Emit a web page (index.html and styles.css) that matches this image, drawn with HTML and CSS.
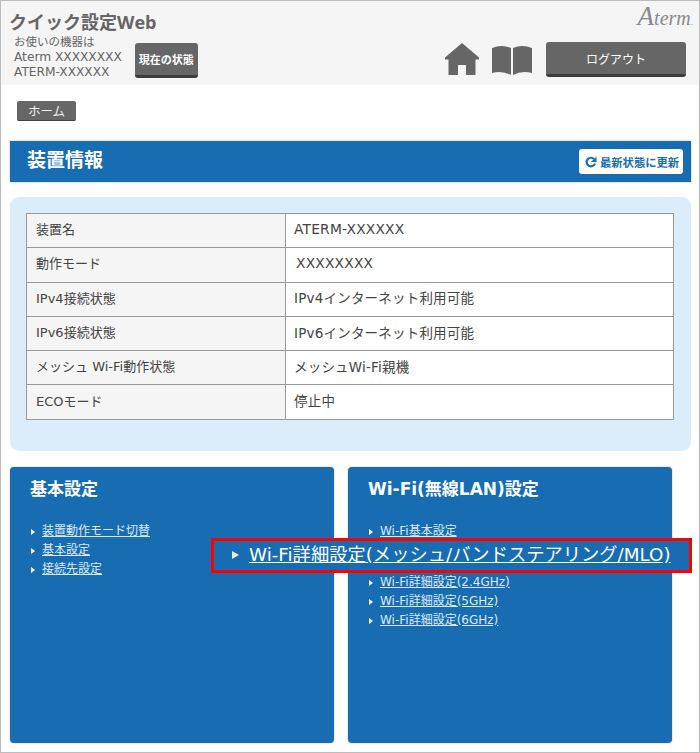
FILE: index.html
```html
<!DOCTYPE html>
<html lang="ja">
<head>
<meta charset="utf-8">
<title>クイック設定Web</title>
<link rel="stylesheet" href="styles.css">
</head>
<body>
<div class="page">
  <header class="header">
    <div class="header-left">
      <h1 class="title">クイック設定Web</h1>
      <div class="device-row">
        <div class="device">
          <div class="device-label">お使いの機器は</div>
          <div>Aterm XXXXXXXX</div>
          <div>ATERM-XXXXXX</div>
        </div>
        <a class="btn btn-status">現在の状態</a>
      </div>
    </div>
    <div class="header-right">
      <div class="logo"><span class="logo-a">A</span>term<span class="logo-dot">.</span></div>
      <div class="tools">
        <svg class="icon-home" width="34" height="32" viewBox="0 0 34 32"><path fill="#666" d="M17 0 L34 14.500 V16.500 H30.500 V32 H21 V22 H13 V32 H3.500 V16.500 H0 V14.500 Z"/></svg>
        <svg class="icon-book" width="40" height="30" viewBox="0 0 40 30"><path fill="#666" d="M0 3 Q10 -1 19 3 V30 Q10 25 0 28 Z M21 3 Q30 -1 40 3 V28 Q30 25 21 30 Z"/></svg>
        <a class="btn btn-logout">ログアウト</a>
      </div>
    </div>
  </header>

  <nav class="crumbs"><a class="crumb">ホーム</a></nav>

  <section class="bar">
    <h2 class="bar-title">装置情報</h2>
    <a class="refresh">
      <svg width="12" height="12" viewBox="0 0 12 12"><path fill="none" stroke="#176cb2" stroke-width="2.200" d="M10 7.500 A4.300 4.300 0 1 1 9 3"/><path fill="#176cb2" d="M11.500 0.500 V6 H6 Z"/></svg>
      <span>最新状態に更新</span>
    </a>
  </section>

  <section class="panel">
    <table class="info">
      <tr><th>装置名</th><td class="latin">ATERM-XXXXXX</td></tr>
      <tr><th>動作モード</th><td class="latin mode">XXXXXXXX</td></tr>
      <tr><th>IPv4接続状態</th><td>IPv4インターネット利用可能</td></tr>
      <tr><th>IPv6接続状態</th><td>IPv6インターネット利用可能</td></tr>
      <tr><th>メッシュ Wi-Fi動作状態</th><td>メッシュWi-Fi親機</td></tr>
      <tr><th>ECOモード</th><td>停止中</td></tr>
    </table>
  </section>

  <div class="cards">
    <section class="card">
      <h3 class="card-title">基本設定</h3>
      <ul class="links">
        <li><a>装置動作モード切替</a></li>
        <li><a>基本設定</a></li>
        <li><a>接続先設定</a></li>
      </ul>
    </section>
    <section class="card">
      <h3 class="card-title">Wi-Fi(無線LAN)設定</h3>
      <ul class="links">
        <li><a>Wi-Fi基本設定</a></li>
        <li class="after-callout"><a>Wi-Fi詳細設定(2.4GHz)</a></li>
        <li><a>Wi-Fi詳細設定(5GHz)</a></li>
        <li><a>Wi-Fi詳細設定(6GHz)</a></li>
      </ul>
    </section>
  </div>

  <div class="callout"><a>Wi-Fi詳細設定(メッシュ/バンドステアリング/MLO)</a></div>
</div>
</body>
</html>
```
FILE: styles.css
```css
* { box-sizing: border-box; }
html, body { margin: 0; padding: 0; background: #fff; }
body { font-family: "DejaVu Sans", "Noto Sans CJK JP", sans-serif; color: #333; }
a { color: inherit; }

.page {
  position: relative;
  width: 700px;
  height: 753px;
  overflow: hidden;
  border: 1px solid #bdbdbd;
  display: flex;
  flex-direction: column;
}

.header {
  height: 84px;
  flex: none;
  background: #f5f5f5;
  display: flex;
  justify-content: space-between;
  padding: 0 8px;
}
.title { margin: 9px 0 0; font-family: "Open Sans", "Noto Sans CJK JP", sans-serif; font-size: 18px; line-height: 25px; font-weight: 700; color: #666; }
.device-row { display: flex; align-items: flex-start; gap: 13px; margin: 0 0 0 5px; }
.device { font-size: 12.200px; line-height: 15px; color: #666; white-space: nowrap; }
.device-label { font-size: 11.500px; line-height: 15px; }
.btn {
  display: flex; align-items: center; justify-content: center;
  background: #666;
  border-bottom: 3px solid #3d3d3d;
  border-radius: 3px;
  color: #fff;
  font-weight: 700;
  font-size: 11px;
  height: 35px;
}
.btn-status { width: 63px; margin-top: 8px; white-space: nowrap; }
.header-right { display: flex; flex-direction: column; align-items: flex-end; }
.logo { font-family: "Liberation Serif", serif; font-style: italic; font-size: 20px; line-height: 24px; color: #8a8a8a; margin-top: 3px; margin-right: -2px; white-space: nowrap; }
.logo-a { font-size: 27px; }
.logo-dot { font-size: 9px; }
.tools { display: flex; align-items: center; margin: 8px 5px 0 0; }
.icon-home { margin-right: 13px; margin-top: -2px; }
.icon-book { margin-right: 14px; }
.btn-logout { width: 140px; font-size: 12px; font-weight: 400; }

.crumbs { height: 56px; flex: none; padding: 16px 0 0 16px; }
.crumb {
  display: flex; align-items: center; justify-content: center;
  width: 59px; height: 20px;
  background: #666;
  border-bottom: 1px solid #444;
  border-radius: 2px;
  color: #eee;
  font-size: 12.500px;
}

.bar {
  flex: none;
  margin-left: 9px;
  width: 681px;
  height: 41px;
  background: #176cb2;
  box-shadow: 0 0 2px rgba(0,0,0,.3);
  display: flex;
  align-items: center;
  justify-content: space-between;
  padding: 0 8px 0 17px;
}
.bar-title { margin: 0 0 4px; font-size: 19px; line-height: 26px; font-weight: 700; color: #fff; }
.refresh {
  display: flex; align-items: center; gap: 3px;
  width: 104px; height: 25px;
  padding-left: 6px;
  background: #fff;
  border-radius: 3px;
  color: #176cb2;
  font-size: 11.300px;
  font-weight: 700;
  white-space: nowrap;
}

.panel {
  flex: none;
  margin: 15px 0 0 9px;
  width: 681px;
  height: 254px;
  padding: 16px 17px 0 16px;
  background: #dbecfb;
  border-radius: 9px;
}
.info { width: 648px; border-collapse: collapse; table-layout: fixed; font-size: 13.500px; letter-spacing: .2px; background: #fff; }
.info th, .info td { border: 1px solid #999; height: 34.300px; padding: 0 8px 4px; text-align: left; font-weight: 400; color: #444; white-space: nowrap; }
.info th { width: 259px; padding-left: 9px; background: #f5f5f5; font-size: 13px; letter-spacing: 0; }
.info .latin { font-size: 13.800px; }
.info .mode { padding-left: 10px; }

.cards { flex: none; display: flex; gap: 14px; margin: 16px 0 0 9px; }
.card {
  width: 324px;
  height: 276px;
  padding: 10px 20px 0;
  background: #176cb2;
  border-radius: 4px;
  color: #fff;
  box-shadow: 0 0 2px rgba(0,0,0,.3);
}
.card-title { margin: 0 0 21px; font-size: 17px; line-height: 24px; font-weight: 700; }
.links { list-style: none; margin: 0; padding: 0; font-size: 12px; line-height: 19px; color: #dce9f5; }
.links li { position: relative; padding-left: 12px; white-space: nowrap; }
.links li::before {
  content: "";
  position: absolute; left: 1px; top: 7px;
  border-left: 4px solid #fff;
  border-top: 3px solid transparent;
  border-bottom: 3px solid transparent;
}
.links a { text-decoration: underline; }
.links .after-callout { margin-top: 32px; }

.callout {
  position: absolute;
  left: 210px;
  top: 537px;
  width: 481px;
  height: 35px;
  border: 3px solid #f00;
  background: #176cb2;
  color: #fff;
  font-size: 18.300px;
  line-height: 28px;
  padding-left: 35px;
  white-space: nowrap;
}
.callout::before {
  content: "";
  position: absolute; left: 18px; top: 10px;
  border-left: 7px solid #e8eef5;
  border-top: 4px solid transparent;
  border-bottom: 4px solid transparent;
}
.callout a { text-decoration: underline; }
```
